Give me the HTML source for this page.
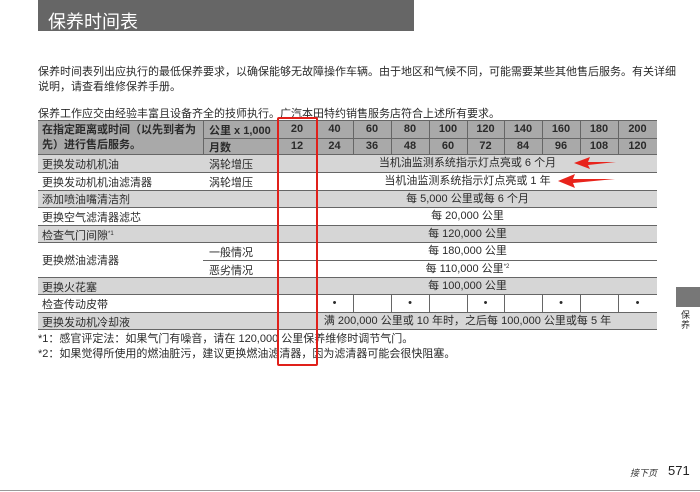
<!DOCTYPE html><html><head><meta charset="utf-8"><style>
*{margin:0;padding:0;box-sizing:border-box}
body{width:700px;height:492px;background:#fff;position:relative;overflow:hidden;font-family:"Liberation Sans","Noto Sans CJK SC",sans-serif;color:#2a2a2a;font-size:11px}
.a{position:absolute;white-space:nowrap}
.r{position:absolute;left:38px;width:619px;border-bottom:1px solid #666}
.g{background:#d6d6d6}
.c{position:absolute;text-align:center;line-height:17px}
.h{background:#a9a9a9;font-weight:bold;font-size:11px;color:#222}
.v{position:absolute;border-left:1px solid #666}
sup{line-height:0;font-size:6px;vertical-align:4px}
</style></head><body>
<div class="a" style="left:38px;top:0;width:376px;height:31px;background:#666"></div>
<div class="a" style="left:48px;top:8px;color:#fff;font-size:18px">保养时间表</div>
<div class="a" style="left:38px;top:65px;line-height:15px;font-size:11px">保养时间表列出应执行的最低保养要求，以确保能够无故障操作车辆。由于地区和气候不同，可能需要某些其他售后服务。有关详细<br>说明，请查看维修保养手册。</div>
<div class="a" style="left:38px;top:105px;font-size:11px">保养工作应交由经验丰富且设备齐全的技师执行。广汽本田特约销售服务店符合上述所有要求。</div>
<div class="a" style="left:38px;top:120px;width:619px;border-top:1px solid #666"></div>
<div class="a h" style="left:38px;top:121px;width:619px;height:34px;border-bottom:1px solid #666"></div>
<div class="a" style="left:42px;top:123px;font-weight:bold;line-height:15px">在指定距离或时间（以先到者为<br>先）进行售后服务。</div>
<div class="a" style="left:203px;top:138px;width:454px;border-top:1px solid #666"></div>
<div class="a" style="left:209px;top:122px;font-weight:bold">公里 x 1,000</div>
<div class="a" style="left:209px;top:139px;font-weight:bold">月数</div>
<div class="r g" style="top:155px;height:18px"></div>
<div class="r" style="top:173px;height:18px"></div>
<div class="r g" style="top:191px;height:17px"></div>
<div class="r" style="top:208px;height:18px"></div>
<div class="r g" style="top:226px;height:17px"></div>
<div class="r" style="top:243px;height:35px"></div>
<div class="a" style="left:203px;top:260px;width:454px;border-top:1px solid #666"></div>
<div class="r g" style="top:278px;height:17px"></div>
<div class="r" style="top:295px;height:18px"></div>
<div class="r g" style="top:313px;height:17px"></div>
<div class="a" style="left:42px;top:156px">更换发动机机油</div>
<div class="a" style="left:209px;top:156px">涡轮增压</div>
<div class="a" style="left:42px;top:174px">更换发动机机油滤清器</div>
<div class="a" style="left:209px;top:174px">涡轮增压</div>
<div class="a" style="left:42px;top:191px">添加喷油嘴清洁剂</div>
<div class="a" style="left:42px;top:209px">更换空气滤清器滤芯</div>
<div class="a" style="left:42px;top:227px">检查气门间隙<sup>*1</sup></div>
<div class="a" style="left:42px;top:252px">更换燃油滤清器</div>
<div class="a" style="left:209px;top:244px">一般情况</div>
<div class="a" style="left:209px;top:262px">恶劣情况</div>
<div class="a" style="left:42px;top:279px">更换火花塞</div>
<div class="a" style="left:42px;top:296px">检查传动皮带</div>
<div class="a" style="left:42px;top:314px">更换发动机冷却液</div>
<div class="v" style="left:203px;top:121px;height:34px"></div>
<div class="v" style="left:278px;top:121px;height:34px"></div>
<div class="c" style="left:278px;top:121px;width:38px;font-weight:bold">20</div><div class="c" style="left:278px;top:138px;width:38px;font-weight:bold">12</div>
<div class="v" style="left:316px;top:121px;height:34px"></div><div class="c" style="left:316px;top:121px;width:37px;font-weight:bold">40</div><div class="c" style="left:316px;top:138px;width:37px;font-weight:bold">24</div>
<div class="v" style="left:353px;top:121px;height:34px"></div><div class="c" style="left:353px;top:121px;width:38px;font-weight:bold">60</div><div class="c" style="left:353px;top:138px;width:38px;font-weight:bold">36</div>
<div class="v" style="left:391px;top:121px;height:34px"></div><div class="c" style="left:391px;top:121px;width:38px;font-weight:bold">80</div><div class="c" style="left:391px;top:138px;width:38px;font-weight:bold">48</div>
<div class="v" style="left:429px;top:121px;height:34px"></div><div class="c" style="left:429px;top:121px;width:38px;font-weight:bold">100</div><div class="c" style="left:429px;top:138px;width:38px;font-weight:bold">60</div>
<div class="v" style="left:467px;top:121px;height:34px"></div><div class="c" style="left:467px;top:121px;width:37px;font-weight:bold">120</div><div class="c" style="left:467px;top:138px;width:37px;font-weight:bold">72</div>
<div class="v" style="left:504px;top:121px;height:34px"></div><div class="c" style="left:504px;top:121px;width:38px;font-weight:bold">140</div><div class="c" style="left:504px;top:138px;width:38px;font-weight:bold">84</div>
<div class="v" style="left:542px;top:121px;height:34px"></div><div class="c" style="left:542px;top:121px;width:38px;font-weight:bold">160</div><div class="c" style="left:542px;top:138px;width:38px;font-weight:bold">96</div>
<div class="v" style="left:580px;top:121px;height:34px"></div><div class="c" style="left:580px;top:121px;width:38px;font-weight:bold">180</div><div class="c" style="left:580px;top:138px;width:38px;font-weight:bold">108</div>
<div class="v" style="left:618px;top:121px;height:34px"></div><div class="c" style="left:618px;top:121px;width:39px;font-weight:bold">200</div><div class="c" style="left:618px;top:138px;width:39px;font-weight:bold">120</div>
<div class="c" style="left:278px;top:155px;width:379px">当机油监测系统指示灯点亮或 6 个月</div>
<div class="c" style="left:278px;top:173px;width:379px">当机油监测系统指示灯点亮或 1 年</div>
<div class="c" style="left:278px;top:191px;width:379px">每 5,000 公里或每 6 个月</div>
<div class="c" style="left:278px;top:208px;width:379px">每 20,000 公里</div>
<div class="c" style="left:278px;top:226px;width:379px">每 120,000 公里</div>
<div class="c" style="left:278px;top:243px;width:379px">每 180,000 公里</div>
<div class="c" style="left:278px;top:261px;width:379px">每 110,000 公里<sup>*2</sup></div>
<div class="c" style="left:278px;top:278px;width:379px">每 100,000 公里</div>
<div class="c" style="left:278px;top:313px;width:379px">满 200,000 公里或 10 年时，之后每 100,000 公里或每 5 年</div>
<div class="v" style="left:316px;top:295px;height:18px"></div>
<div class="v" style="left:353px;top:295px;height:18px"></div>
<div class="v" style="left:391px;top:295px;height:18px"></div>
<div class="v" style="left:429px;top:295px;height:18px"></div>
<div class="v" style="left:467px;top:295px;height:18px"></div>
<div class="v" style="left:504px;top:295px;height:18px"></div>
<div class="v" style="left:542px;top:295px;height:18px"></div>
<div class="v" style="left:580px;top:295px;height:18px"></div>
<div class="v" style="left:618px;top:295px;height:18px"></div>
<div class="c" style="left:316px;top:295px;width:37px">•</div>
<div class="c" style="left:391px;top:295px;width:38px">•</div>
<div class="c" style="left:467px;top:295px;width:37px">•</div>
<div class="c" style="left:542px;top:295px;width:38px">•</div>
<div class="c" style="left:618px;top:295px;width:39px">•</div>
<div class="a" style="left:38px;top:332px;line-height:15px">*1：感官评定法：如果气门有噪音，请在 120,000 公里保养维修时调节气门。<br>*2：如果觉得所使用的燃油脏污，建议更换燃油滤清器，因为滤清器可能会很快阻塞。</div>
<div class="a" style="left:277px;top:117px;width:41px;height:249px;border:2px solid #e0201a;border-radius:2px"></div>
<svg class="a" style="left:0;top:0" width="700" height="492"><polygon points="574,163 590,157 588,162 616,162 588,165 590,169" fill="#e8241c"/><polygon points="558,181 575,174 573,179 615,179 573,183 575,188" fill="#e8241c"/></svg>
<div class="a" style="left:676px;top:287px;width:24px;height:20px;background:#777"></div>
<div class="a" style="left:681px;top:310px;font-size:9px;line-height:10px">保<br>养</div>
<div class="a" style="left:630px;top:466px;font-size:9px;font-style:italic;color:#333">接下页</div>
<div class="a" style="left:668px;top:463px;font-size:13px;color:#222">571</div>
<div class="a" style="left:0;top:490px;width:700px;border-top:1px solid #999"></div>
</body></html>
